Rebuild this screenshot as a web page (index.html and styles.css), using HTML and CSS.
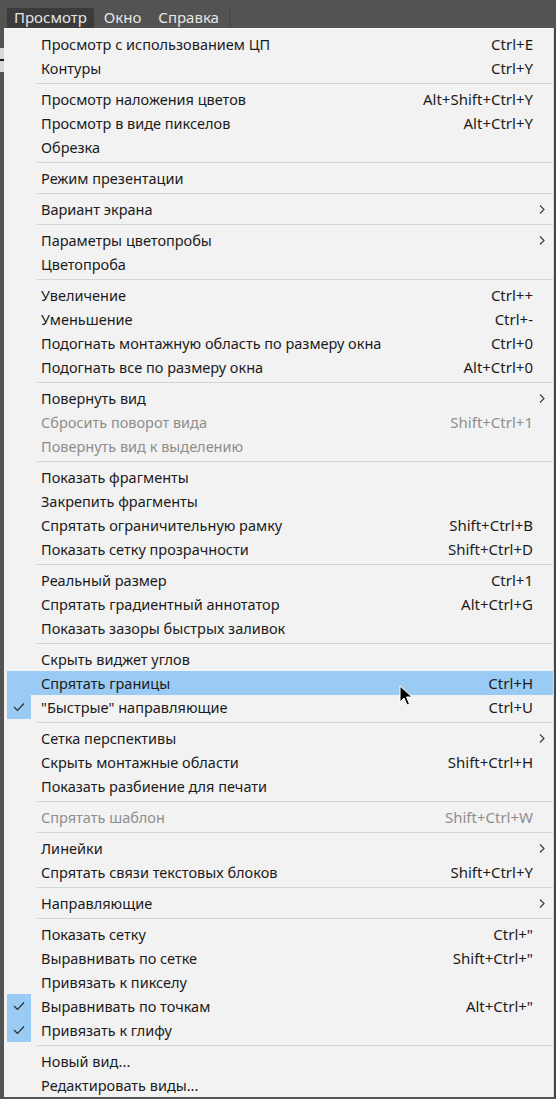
FILE: index.html
```html
<!DOCTYPE html>
<html>
<head>
  <title>Просмотр</title>
  <link rel="stylesheet" href="styles.css">
</head>
<body>
  <div class="app">
    <nav class="menubar">
      <span class="menubar-item active">Просмотр</span>
      <span class="menubar-item">Окно</span>
      <span class="menubar-item">Справка</span>
      <span class="menubar-sep"></span>
    </nav>

    <div class="workspace">
      <div class="side-strip">
        <div class="side-field"></div>
      </div>

      <ul class="menu">
        <li class="item"><span class="check"></span><span class="label">Просмотр с использованием ЦП</span><span class="key">Ctrl+E</span><span class="sub"></span></li>
        <li class="item"><span class="check"></span><span class="label">Контуры</span><span class="key">Ctrl+Y</span><span class="sub"></span></li>
        <li class="sep"></li>
        <li class="item"><span class="check"></span><span class="label">Просмотр наложения цветов</span><span class="key">Alt+Shift+Ctrl+Y</span><span class="sub"></span></li>
        <li class="item"><span class="check"></span><span class="label">Просмотр в виде пикселов</span><span class="key">Alt+Ctrl+Y</span><span class="sub"></span></li>
        <li class="item"><span class="check"></span><span class="label">Обрезка</span><span class="key"></span><span class="sub"></span></li>
        <li class="sep"></li>
        <li class="item"><span class="check"></span><span class="label">Режим презентации</span><span class="key"></span><span class="sub"></span></li>
        <li class="sep"></li>
        <li class="item"><span class="check"></span><span class="label">Вариант экрана</span><span class="key"></span><span class="sub"><svg width="6" height="9" viewBox="0 0 6 9"><path d="M1 0.5 L5 4.5 L1 8.5" fill="none" stroke="#3a3a3a" stroke-width="1.1"/></svg></span></li>
        <li class="sep"></li>
        <li class="item"><span class="check"></span><span class="label">Параметры цветопробы</span><span class="key"></span><span class="sub"><svg width="6" height="9" viewBox="0 0 6 9"><path d="M1 0.5 L5 4.5 L1 8.5" fill="none" stroke="#3a3a3a" stroke-width="1.1"/></svg></span></li>
        <li class="item"><span class="check"></span><span class="label">Цветопроба</span><span class="key"></span><span class="sub"></span></li>
        <li class="sep"></li>
        <li class="item"><span class="check"></span><span class="label">Увеличение</span><span class="key">Ctrl++</span><span class="sub"></span></li>
        <li class="item"><span class="check"></span><span class="label">Уменьшение</span><span class="key">Ctrl+-</span><span class="sub"></span></li>
        <li class="item"><span class="check"></span><span class="label">Подогнать монтажную область по размеру окна</span><span class="key">Ctrl+0</span><span class="sub"></span></li>
        <li class="item"><span class="check"></span><span class="label">Подогнать все по размеру окна</span><span class="key">Alt+Ctrl+0</span><span class="sub"></span></li>
        <li class="sep"></li>
        <li class="item"><span class="check"></span><span class="label">Повернуть вид</span><span class="key"></span><span class="sub"><svg width="6" height="9" viewBox="0 0 6 9"><path d="M1 0.5 L5 4.5 L1 8.5" fill="none" stroke="#3a3a3a" stroke-width="1.1"/></svg></span></li>
        <li class="item disabled"><span class="check"></span><span class="label">Сбросить поворот вида</span><span class="key">Shift+Ctrl+1</span><span class="sub"></span></li>
        <li class="item disabled"><span class="check"></span><span class="label">Повернуть вид к выделению</span><span class="key"></span><span class="sub"></span></li>
        <li class="sep"></li>
        <li class="item"><span class="check"></span><span class="label">Показать фрагменты</span><span class="key"></span><span class="sub"></span></li>
        <li class="item"><span class="check"></span><span class="label">Закрепить фрагменты</span><span class="key"></span><span class="sub"></span></li>
        <li class="item"><span class="check"></span><span class="label">Спрятать ограничительную рамку</span><span class="key">Shift+Ctrl+B</span><span class="sub"></span></li>
        <li class="item"><span class="check"></span><span class="label">Показать сетку прозрачности</span><span class="key">Shift+Ctrl+D</span><span class="sub"></span></li>
        <li class="sep"></li>
        <li class="item"><span class="check"></span><span class="label">Реальный размер</span><span class="key">Ctrl+1</span><span class="sub"></span></li>
        <li class="item"><span class="check"></span><span class="label">Спрятать градиентный аннотатор</span><span class="key">Alt+Ctrl+G</span><span class="sub"></span></li>
        <li class="item"><span class="check"></span><span class="label">Показать зазоры быстрых заливок</span><span class="key"></span><span class="sub"></span></li>
        <li class="sep"></li>
        <li class="item"><span class="check"></span><span class="label">Скрыть виджет углов</span><span class="key"></span><span class="sub"></span></li>
        <li class="item hover"><span class="check"></span><span class="label">Спрятать границы</span><span class="key">Ctrl+H</span><span class="sub"></span></li>
        <li class="item checked"><span class="check"><svg width="12" height="10" viewBox="0 0 12 10"><path d="M1 5 L4.5 8.5 L11 1.5" fill="none" stroke="#2b2b2b" stroke-width="1.2"/></svg></span><span class="label">"Быстрые" направляющие</span><span class="key">Ctrl+U</span><span class="sub"></span></li>
        <li class="sep"></li>
        <li class="item"><span class="check"></span><span class="label">Сетка перспективы</span><span class="key"></span><span class="sub"><svg width="6" height="9" viewBox="0 0 6 9"><path d="M1 0.5 L5 4.5 L1 8.5" fill="none" stroke="#3a3a3a" stroke-width="1.1"/></svg></span></li>
        <li class="item"><span class="check"></span><span class="label">Скрыть монтажные области</span><span class="key">Shift+Ctrl+H</span><span class="sub"></span></li>
        <li class="item"><span class="check"></span><span class="label">Показать разбиение для печати</span><span class="key"></span><span class="sub"></span></li>
        <li class="sep"></li>
        <li class="item disabled"><span class="check"></span><span class="label">Спрятать шаблон</span><span class="key">Shift+Ctrl+W</span><span class="sub"></span></li>
        <li class="sep"></li>
        <li class="item"><span class="check"></span><span class="label">Линейки</span><span class="key"></span><span class="sub"><svg width="6" height="9" viewBox="0 0 6 9"><path d="M1 0.5 L5 4.5 L1 8.5" fill="none" stroke="#3a3a3a" stroke-width="1.1"/></svg></span></li>
        <li class="item"><span class="check"></span><span class="label">Спрятать связи текстовых блоков</span><span class="key">Shift+Ctrl+Y</span><span class="sub"></span></li>
        <li class="sep"></li>
        <li class="item"><span class="check"></span><span class="label">Направляющие</span><span class="key"></span><span class="sub"><svg width="6" height="9" viewBox="0 0 6 9"><path d="M1 0.5 L5 4.5 L1 8.5" fill="none" stroke="#3a3a3a" stroke-width="1.1"/></svg></span></li>
        <li class="sep"></li>
        <li class="item"><span class="check"></span><span class="label">Показать сетку</span><span class="key">Ctrl+"</span><span class="sub"></span></li>
        <li class="item"><span class="check"></span><span class="label">Выравнивать по сетке</span><span class="key">Shift+Ctrl+"</span><span class="sub"></span></li>
        <li class="item"><span class="check"></span><span class="label">Привязать к пикселу</span><span class="key"></span><span class="sub"></span></li>
        <li class="item checked"><span class="check"><svg width="12" height="10" viewBox="0 0 12 10"><path d="M1 5 L4.5 8.5 L11 1.5" fill="none" stroke="#2b2b2b" stroke-width="1.2"/></svg></span><span class="label">Выравнивать по точкам</span><span class="key">Alt+Ctrl+"</span><span class="sub"></span></li>
        <li class="item checked"><span class="check"><svg width="12" height="10" viewBox="0 0 12 10"><path d="M1 5 L4.5 8.5 L11 1.5" fill="none" stroke="#2b2b2b" stroke-width="1.2"/></svg></span><span class="label">Привязать к глифу</span><span class="key"></span><span class="sub"></span></li>
        <li class="sep"></li>
        <li class="item"><span class="check"></span><span class="label">Новый вид...</span><span class="key"></span><span class="sub"></span></li>
        <li class="item"><span class="check"></span><span class="label">Редактировать виды...</span><span class="key"></span><span class="sub"></span></li>
      </ul>

      <div class="right-strip"></div>

      <svg class="cursor" width="14" height="22" viewBox="0 0 14 22">
        <path d="M1 1 L1 17 L5 13 L8 20 L10.5 19 L7.5 12 L13 12 Z" fill="#000" stroke="#fff" stroke-width="1"/>
      </svg>
    </div>
  </div>
</body>
</html>
```

FILE: styles.css
```css
body {
  margin: 0;
  background-color: #535353;
  font-family: "Noto Sans", "Open Sans", sans-serif;
  font-size: 14.5px;
  color: #1b1b1b;
}

.app {
  width: 556px;
  height: 1099px;
  overflow: hidden;
}

.menubar {
  display: flex;
  align-items: flex-end;
  gap: 3px;
  height: 28px;
  padding-left: 7px;
  background-color: #535353;
}

.menubar-item {
  height: 20px;
  line-height: 19px;
  padding: 0 7px;
  color: #e6e6e6;
  font-size: 15px;
}

.menubar-item.active {
  background-color: #3b3b3b;
  border-radius: 2px 2px 0 0;
}

.menubar-sep {
  width: 2px;
  height: 20px;
  background-color: #4a4a4a;
}

.workspace {
  position: relative;
  display: flex;
}

.side-strip {
  width: 4px;
  background-color: #535353;
}

.side-field {
  height: 24px;
  margin-top: 20px;
  background: linear-gradient(#d8d8d8 0 11px, #1a1a1a 11px 13px, #d8d8d8 13px);
}

.right-strip {
  flex: 1;
  background-color: #444;
}

.menu {
  list-style: none;
  margin: 0;
  padding: 3px 0 0 3px;
  width: 546px;
  background-color: #f2f2f2;
  border-top: 1px solid #fafafa;
  border-right: 1px solid #dcdcdc;
}

.item {
  display: grid;
  grid-template-columns: 24px 1fr auto 20px;
  align-items: center;
  height: 24px;
}

.check {
  display: flex;
  align-items: center;
  justify-content: center;
  height: 24px;
}

.checked .check {
  background-color: #99cbf5;
}

.label {
  padding-left: 10px;
  white-space: nowrap;
}

.key {
  text-align: right;
  white-space: nowrap;
  font-size: 15px;
}

.sub {
  display: flex;
  align-items: center;
  padding-left: 6px;
}

.hover {
  background-color: #99cbf5;
}

.disabled {
  color: #8e8e8e;
}

.sep {
  height: 1px;
  margin: 3px 0 3px 30px;
  background-color: #d4d4d4;
}

.cursor {
  position: absolute;
  left: 399px;
  top: 657px;
}
```
